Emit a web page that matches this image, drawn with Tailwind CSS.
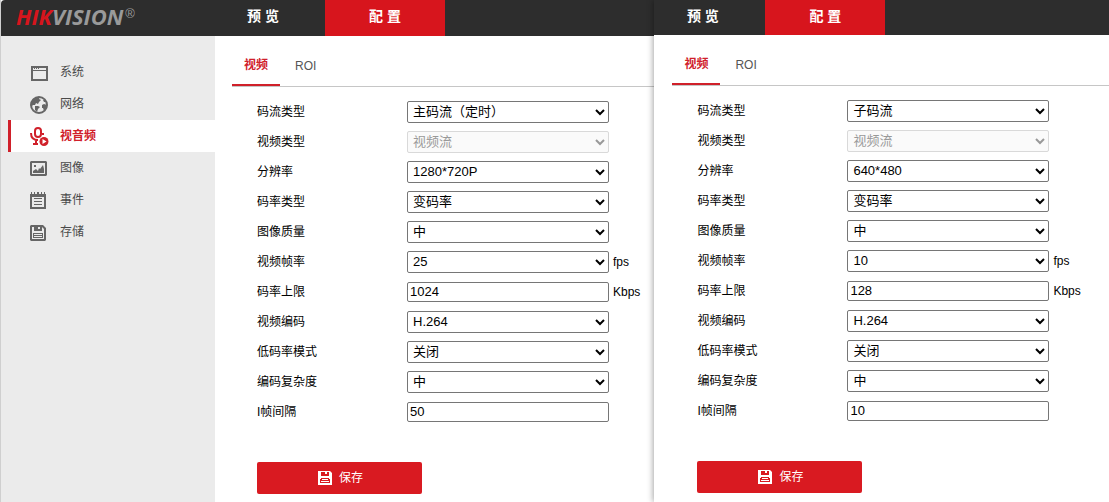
<!DOCTYPE html>
<html lang="zh-CN">
<head>
    <meta charset="UTF-8">
    <meta name="viewport" content="width=device-width, initial-scale=1.0">
    <title>HIKVISION 配置</title>
    <script src="https://cdn.jsdelivr.net/npm/@tailwindcss/browser@4"></script>
</head>
<body class="flex min-h-screen bg-white text-xs text-black font-['Liberation_Sans','Noto_Sans_CJK_SC',sans-serif]">
    <!-- 图标 -->
    <svg class="hidden">
        <symbol id="icon-save" viewBox="0 0 16 16">
            <path fill="currentColor" fill-rule="evenodd" d="M1 0H13L16 3V15L15 16H1L0 15V1ZM2 2V14H14V4L12 2V6H4V2ZM8 2V4H10V2ZM3 8H13V13H3ZM4 9V10H12V9ZM4 11V12H12V11Z"/>
        </symbol>
        <symbol id="icon-save-solid" viewBox="0 0 14 14">
            <path fill="currentColor" fill-rule="evenodd" d="M0 0H12L14 2V14H0ZM3 1V5H11V1H9V3H7V1ZM3 7H11V8H12V12H2V8H3ZM4 8V9H10V8ZM3 10V11H11V10Z"/>
        </symbol>
    </svg>

    <!-- 主码流窗口 -->
    <section class="flex min-w-0 flex-[654_1_0] flex-col border-l border-[#cfcfcf]">
        <header class="flex h-9 rounded-tl-sm bg-[#2d2d2d] text-sm font-bold text-white">
            <a href="#" aria-label="HIKVISION" class="flex w-[200px] items-start gap-0.5 pl-[15px] pt-1">
                <span class="text-[22px] leading-6 font-bold italic text-[#9a9a9a] font-['Open_Sans',sans-serif]"><span class="text-[#d7151d]">HIK</span>VISION</span>
                <span class="text-[13px] leading-5 font-normal text-[#9a9a9a]">®</span>
            </a>
            <a href="#" class="flex w-[124px] items-center justify-center pb-1">预 览</a>
            <a href="#" class="flex w-[120px] items-center justify-center bg-[#d7151d] pb-1">配 置</a>
        </header>
        <div class="flex flex-1">
            <nav class="flex w-[214px] shrink-0 flex-col bg-[#ebebeb] pl-[7px] pt-5 text-[#4a4a4a]">
                <a href="#" class="flex h-8 items-center gap-3 pl-[22px]">
                    <svg class="size-[18px]" viewBox="0 0 18 18"><path fill="#666" fill-rule="evenodd" d="M1 3H18V18H1ZM3 5V7H16V5ZM3 8V16H16V8Z"/><path fill="#666" d="M4 5h1v1H4zM6 5h1v1H6zM8 5h1v1H8z"/></svg>
                    <span>系统</span>
                </a>
                <a href="#" class="flex h-8 items-center gap-3 pl-[22px]">
                    <svg class="size-[18px] overflow-visible" viewBox="0 -1 18 18"><circle cx="9" cy="9" r="8" fill="none" stroke="#666" stroke-width="2"/><path fill="#666" d="M1 7L3 3L8 1H10L9 3L11 4L9 6L8 8L6 7L5 9L3 9L2 10ZM5 10H8L10 11L8 13L7 16L5 14ZM12 9L14 8L17 9L16 13L14 15L13 12H12ZM13 4L15 4L16 6L14 6Z"/></svg>
                    <span>网络</span>
                </a>
                <a href="#" class="flex h-8 items-center gap-3 border-l-[3px] border-[#d0202a] bg-white pl-[19px] font-bold text-[#d0202a]">
                    <svg class="size-[18px] overflow-visible" viewBox="0 0 18 18"><rect x="5" y="1" width="6" height="9" rx="3" fill="none" stroke="currentColor" stroke-width="2"/><path fill="none" stroke="currentColor" stroke-width="2" d="M1 6C1 10 3 13 8 13M13 6V8M6 13V17M3 17H8"/><circle cx="14" cy="14.5" r="4.5" fill="currentColor"/><path fill="#fff" d="M12.5 12L16.5 14.5L12.5 17Z"/></svg>
                    <span>视音频</span>
                </a>
                <a href="#" class="flex h-8 items-center gap-3 pl-[22px]">
                    <svg class="size-[18px]" viewBox="0 0 18 18"><path fill="#666" fill-rule="evenodd" d="M1 2H16L17 3V16L16 17H1L0 16V3ZM2 4V15H15V4Z"/><path fill="#666" d="M3 14V12L6 10L8 12L9 9L10 10L13 6L14 10V14ZM4 6h2v2H4z"/></svg>
                    <span>图像</span>
                </a>
                <a href="#" class="flex h-8 items-center gap-3 pl-[22px]">
                    <svg class="size-[18px]" viewBox="0 0 18 18"><path fill="#666" fill-rule="evenodd" d="M0 3H16V18H0ZM2 6V16H14V6Z"/><path fill="#666" d="M1 1h1v3H1zM4 1h1v3H4zM7 1h2v3H7zM11 1h1v3h-1zM14 1h1v3h-1zM4 7h8v1H4zM4 10h8v1H4zM4 13h8v1H4z"/></svg>
                    <span>事件</span>
                </a>
                <a href="#" class="flex h-8 items-center gap-3 pl-[22px]">
                    <svg class="size-[18px] text-[#666]"><use href="#icon-save" x="0" y="2" width="16" height="16"/></svg>
                    <span>存储</span>
                </a>
            </nav>
            <main class="min-w-0 flex-1 pl-[17px]">
                <div class="flex h-[51px] items-end border-b border-[#c6c6c6]">
                    <a href="#" class="flex h-10 w-12 justify-center border-b-2 border-[#d0202a] pt-[11px] font-bold text-[#d0202a]">视频</a>
                    <a href="#" class="flex h-10 items-center pl-[15px] text-xs text-[#555]">ROI</a>
                </div>
                <form class="pl-[25px] pt-[10px]">
                    <div class="flex h-[30px] items-center"><label for="a1" class="w-[150px]">码流类型</label><select id="a1" class="h-[22px] w-[202px] rounded-xs border border-[#767676] bg-white px-px pb-0.5 text-[13px]"><option>主码流（定时）</option></select></div>
                    <div class="flex h-[30px] items-center"><label for="a2" class="w-[150px]">视频类型</label><select id="a2" disabled class="h-[22px] w-[202px] rounded-xs border border-[#d9d9d9] bg-[#fafafa] px-px pb-0.5 text-[13px] text-[#999] opacity-100"><option>视频流</option></select></div>
                    <div class="flex h-[30px] items-center"><label for="a3" class="w-[150px]">分辨率</label><select id="a3" class="h-[22px] w-[202px] rounded-xs border border-[#767676] bg-white px-px pb-0.5 text-[13px]"><option>1280*720P</option></select></div>
                    <div class="flex h-[30px] items-center"><label for="a4" class="w-[150px]">码率类型</label><select id="a4" class="h-[22px] w-[202px] rounded-xs border border-[#767676] bg-white px-px pb-0.5 text-[13px]"><option>变码率</option></select></div>
                    <div class="flex h-[30px] items-center"><label for="a5" class="w-[150px]">图像质量</label><select id="a5" class="h-[22px] w-[202px] rounded-xs border border-[#767676] bg-white px-px pb-0.5 text-[13px]"><option>中</option></select></div>
                    <div class="flex h-[30px] items-center"><label for="a6" class="w-[150px]">视频帧率</label><select id="a6" class="h-[22px] w-[202px] rounded-xs border border-[#767676] bg-white px-px pb-0.5 text-[13px]"><option>25</option></select><span class="pl-1">fps</span></div>
                    <div class="flex h-[30px] items-center"><label for="a7" class="w-[150px]">码率上限</label><input id="a7" type="text" value="1024" class="h-5 w-[202px] rounded-xs border border-[#767676] bg-white px-0.5 pb-0.5 text-[13px]"><span class="pl-1">Kbps</span></div>
                    <div class="flex h-[30px] items-center"><label for="a8" class="w-[150px]">视频编码</label><select id="a8" class="h-[22px] w-[202px] rounded-xs border border-[#767676] bg-white px-px pb-0.5 text-[13px]"><option>H.264</option></select></div>
                    <div class="flex h-[30px] items-center"><label for="a9" class="w-[150px]">低码率模式</label><select id="a9" class="h-[22px] w-[202px] rounded-xs border border-[#767676] bg-white px-px pb-0.5 text-[13px]"><option>关闭</option></select></div>
                    <div class="flex h-[30px] items-center"><label for="a10" class="w-[150px]">编码复杂度</label><select id="a10" class="h-[22px] w-[202px] rounded-xs border border-[#767676] bg-white px-px pb-0.5 text-[13px]"><option>中</option></select></div>
                    <div class="flex h-[30px] items-center"><label for="a11" class="w-[150px]">I帧间隔</label><input id="a11" type="text" value="50" class="h-5 w-[202px] rounded-xs border border-[#767676] bg-white px-0.5 pb-0.5 text-[13px]"></div>
                    <button type="button" class="mt-[35px] flex h-8 w-[165px] items-center justify-center gap-[7px] rounded-xs bg-[#d91a21] pl-0.5 text-white"><svg class="size-[14px]"><use href="#icon-save-solid"/></svg>保存</button>
                </form>
            </main>
        </div>
    </section>

    <!-- 子码流窗口 -->
    <section class="flex min-w-0 flex-[455_1_0] flex-col bg-white shadow-[-1px_0_6px_rgba(0,0,0,0.35)]">
        <header class="flex h-[35px] bg-[#2d2d2d] text-sm font-bold text-white">
            <a href="#" class="flex w-[111px] items-center justify-center pr-[14px] pb-1">预 览</a>
            <a href="#" class="flex w-[120px] items-center justify-center bg-[#d7151d] pb-1">配 置</a>
        </header>
        <main class="pl-[18px]">
            <div class="flex h-[51px] items-end border-b border-[#c6c6c6]">
                <a href="#" class="flex h-10 w-12 justify-center border-b-2 border-[#d0202a] pt-[11px] font-bold text-[#d0202a]">视频</a>
                <a href="#" class="flex h-10 items-center pl-[15px] text-xs text-[#555]">ROI</a>
            </div>
            <form class="pl-[25px] pt-[10px]">
                <div class="flex h-[30px] items-center"><label for="b1" class="w-[150px]">码流类型</label><select id="b1" class="h-[22px] w-[202px] rounded-xs border border-[#767676] bg-white px-px pb-0.5 text-[13px]"><option>子码流</option></select></div>
                <div class="flex h-[30px] items-center"><label for="b2" class="w-[150px]">视频类型</label><select id="b2" disabled class="h-[22px] w-[202px] rounded-xs border border-[#d9d9d9] bg-[#fafafa] px-px pb-0.5 text-[13px] text-[#999] opacity-100"><option>视频流</option></select></div>
                <div class="flex h-[30px] items-center"><label for="b3" class="w-[150px]">分辨率</label><select id="b3" class="h-[22px] w-[202px] rounded-xs border border-[#767676] bg-white px-px pb-0.5 text-[13px]"><option>640*480</option></select></div>
                <div class="flex h-[30px] items-center"><label for="b4" class="w-[150px]">码率类型</label><select id="b4" class="h-[22px] w-[202px] rounded-xs border border-[#767676] bg-white px-px pb-0.5 text-[13px]"><option>变码率</option></select></div>
                <div class="flex h-[30px] items-center"><label for="b5" class="w-[150px]">图像质量</label><select id="b5" class="h-[22px] w-[202px] rounded-xs border border-[#767676] bg-white px-px pb-0.5 text-[13px]"><option>中</option></select></div>
                <div class="flex h-[30px] items-center"><label for="b6" class="w-[150px]">视频帧率</label><select id="b6" class="h-[22px] w-[202px] rounded-xs border border-[#767676] bg-white px-px pb-0.5 text-[13px]"><option>10</option></select><span class="pl-1">fps</span></div>
                <div class="flex h-[30px] items-center"><label for="b7" class="w-[150px]">码率上限</label><input id="b7" type="text" value="128" class="h-5 w-[202px] rounded-xs border border-[#767676] bg-white px-0.5 pb-0.5 text-[13px]"><span class="pl-1">Kbps</span></div>
                <div class="flex h-[30px] items-center"><label for="b8" class="w-[150px]">视频编码</label><select id="b8" class="h-[22px] w-[202px] rounded-xs border border-[#767676] bg-white px-px pb-0.5 text-[13px]"><option>H.264</option></select></div>
                <div class="flex h-[30px] items-center"><label for="b9" class="w-[150px]">低码率模式</label><select id="b9" class="h-[22px] w-[202px] rounded-xs border border-[#767676] bg-white px-px pb-0.5 text-[13px]"><option>关闭</option></select></div>
                <div class="flex h-[30px] items-center"><label for="b10" class="w-[150px]">编码复杂度</label><select id="b10" class="h-[22px] w-[202px] rounded-xs border border-[#767676] bg-white px-px pb-0.5 text-[13px]"><option>中</option></select></div>
                <div class="flex h-[30px] items-center"><label for="b11" class="w-[150px]">I帧间隔</label><input id="b11" type="text" value="10" class="h-5 w-[202px] rounded-xs border border-[#767676] bg-white px-0.5 pb-0.5 text-[13px]"></div>
                <button type="button" class="mt-[35px] flex h-8 w-[165px] items-center justify-center gap-[7px] rounded-xs bg-[#d91a21] pl-0.5 text-white"><svg class="size-[14px]"><use href="#icon-save-solid"/></svg>保存</button>
            </form>
        </main>
    </section>
</body>
</html>
